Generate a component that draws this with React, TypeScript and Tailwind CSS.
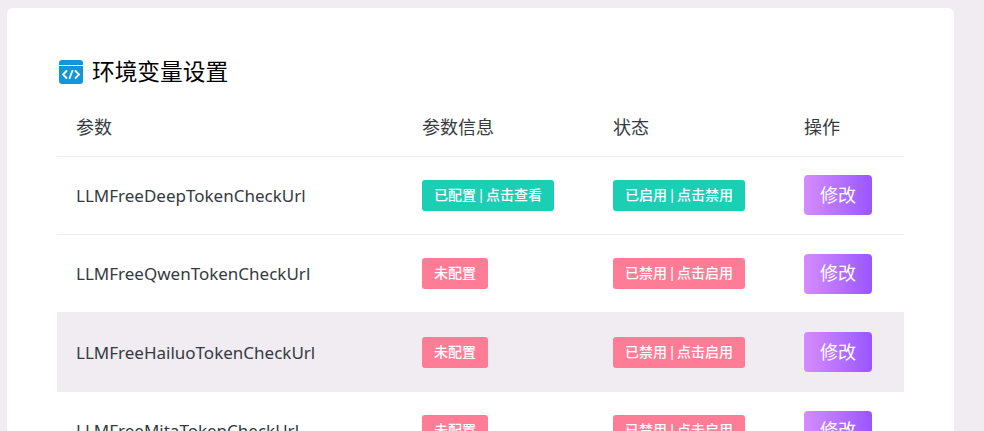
const FONT = "font-['Noto_Sans','Noto_Sans_CJK_SC',sans-serif]";

function Badge({ color, w, children }: { color: string; w: string; children: React.ReactNode }) {
  return (
    <span className={`inline-flex h-[31px] items-center justify-center rounded-[3px] pb-[1px] text-[14px] font-medium leading-none text-white [word-spacing:-2.5px] ${color} ${w}`}>
      {children}
    </span>
  );
}

function EditBtn() {
  return (
    <button className="flex h-[40px] w-[68px] items-center justify-center rounded-[4px] bg-gradient-to-r from-[#d68bff] to-[#9a55ff] text-[18px] text-white">
      修改
    </button>
  );
}

const rows = [
  { name: "LLMFreeDeepTokenCheckUrl", on: true, bg: "", h: "h-[77.95px]" },
  { name: "LLMFreeQwenTokenCheckUrl", on: false, bg: "", h: "h-[78.5px]" },
  { name: "LLMFreeHailuoTokenCheckUrl", on: false, bg: "bg-[#f1ecf2]", h: "h-[78.5px]" },
  { name: "LLMFreeMitaTokenCheckUrl", on: false, bg: "", h: "h-[78.5px]" },
];

function Row({ r }: { r: (typeof rows)[number] }) {
  return (
    <div className={`grid grid-cols-[346px_191px_191px_119px] items-center border-b border-[#ebedf2] pl-[19px] ${r.h} ${r.bg}`}>
      <div className="pt-[0.6px] text-[17px] text-[#343a40]">{r.name}</div>
      <div>
        {r.on ? (
          <Badge color="bg-[#1bcfb4]" w="w-[132px]">已配置 | 点击查看</Badge>
        ) : (
          <Badge color="bg-[#fe7c96]" w="w-[66px]">未配置</Badge>
        )}
      </div>
      <div>
        {r.on ? (
          <Badge color="bg-[#1bcfb4]" w="w-[132px]">已启用 | 点击禁用</Badge>
        ) : (
          <Badge color="bg-[#fe7c96]" w="w-[132px]">已禁用 | 点击启用</Badge>
        )}
      </div>
      <div><EditBtn /></div>
    </div>
  );
}

export default function App() {
  return (
    <div className={`h-screen overflow-hidden bg-[#f1ecf2] pl-[7px] pr-[30px] pt-[8px] ${FONT}`}>
      <div className="h-[500px] rounded-[6px] bg-white px-[50px] pt-[50px]">
        <div className="flex h-[28px] items-center gap-[9px] pl-[2px]">
          <svg width="24" height="24" viewBox="0 0 24 24" className="shrink-0">
            <rect x="0" y="0" width="24" height="24" rx="3" fill="#1296db" />
            <rect x="0" y="5" width="24" height="1" fill="#ffffff" />
            <path d="M8 10.5 L4 14.5 L8 18.5 M16 10.5 L20 14.5 L16 18.5 M13.7 10 L10.3 19" fill="none" stroke="#fff" strokeWidth="1.8" />
          </svg>
          <h1 className="text-[22.7px] leading-none text-black">环境变量设置</h1>
        </div>
        <div className="grid h-[71px] grid-cols-[346px_191px_191px_119px] items-center border-b border-[#ebedf2] pl-[19px] pt-[13px] text-[18px] text-[#343a40]">
          <div>参数</div>
          <div>参数信息</div>
          <div>状态</div>
          <div>操作</div>
        </div>
        {rows.map((r) => (
          <Row key={r.name} r={r} />
        ))}
      </div>
    </div>
  );
}
